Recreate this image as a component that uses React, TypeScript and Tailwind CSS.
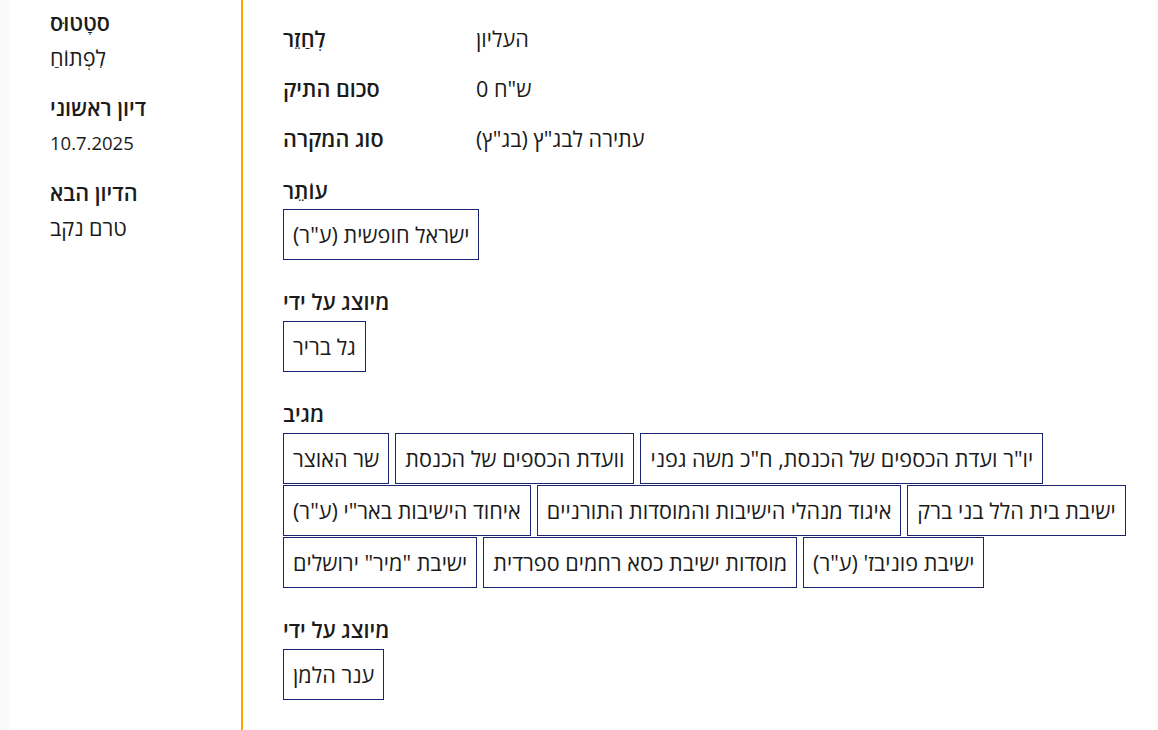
const font = { fontFamily: '"Open Sans", "Liberation Sans", "DejaVu Sans", sans-serif' };

const sideItems = [
    { label: 'סטָטוּס', value: 'לִפְתוֹחַ' },
    { label: 'דיון ראשוני', value: '10.7.2025', latin: true },
    { label: 'הדיון הבא', value: 'טרם נקב' },
];

const rows = [
    { label: 'לְחַזֵר', value: 'העליון' },
    { label: 'סכום התיק', value: 'ש"ח 0' },
    { label: 'סוג המקרה', value: 'עתירה לבג"ץ (בג"ץ)' },
];

const sections = [
    { title: 'עוֹתֵר', tags: ['ישראל חופשית (ע"ר)'], first: true },
    { title: 'מיוצג על ידי', tags: ['גל בריר'] },
    {
        title: 'מגיב',
        tags: [
            'שר האוצר',
            'וועדת הכספים של הכנסת',
            'יו"ר ועדת הכספים של הכנסת, ח"כ משה גפני',
            'איחוד הישיבות באר"י (ע"ר)',
            'איגוד מנהלי הישיבות והמוסדות התורניים',
            'ישיבת בית הלל בני ברק',
            'ישיבת "מיר" ירושלים',
            'מוסדות ישיבת כסא רחמים ספרדית',
            'ישיבת פוניבז\' (ע"ר)',
        ],
    },
    { title: 'מיוצג על ידי', tags: ['ענר הלמן'] },
];

// Hebrew glyphs in the installed fonts run small, so Hebrew text is set a little larger
const Tag = ({ text }: { text: string }) => (
    <div className="border border-[#1c2470] px-[9px] py-[12px] leading-[25px]">
        <span dir="rtl" className="inline-block">{text}</span>
    </div>
);

const App = () => {
    return (
        <div dir="ltr" style={font} className="flex h-[730px] overflow-hidden bg-white text-[21.6px] text-[#1b1b1b]">
            {/* sidebar */}
            <aside className="flex w-[243px] shrink-0 border-r-2 border-[#ffa500]">
                <div className="w-[10px] bg-[#fafafa]"></div>
                <div className="flex flex-col pl-[40px] pt-[10px]">
                    {sideItems.map((item) => (
                        <div key={item.label} className="mb-[25px] flex flex-col items-start gap-[10px] leading-[25px]">
                            <span dir="rtl" className="inline-block font-semibold">{item.label}</span>
                            {item.latin ? (
                                <span className="inline-block text-[18.5px]">{item.value}</span>
                            ) : (
                                <span dir="rtl" className="inline-block">{item.value}</span>
                            )}
                        </div>
                    ))}
                </div>
            </aside>

            {/* main */}
            <main className="flex-1 pl-[40px]">
                <div className="pt-[13px]">
                    {rows.map((row) => (
                        <div key={row.label} className="flex h-[50px] items-center leading-[25px]">
                            <div className="w-[193px] shrink-0">
                                <span dir="rtl" className="inline-block font-semibold">{row.label}</span>
                            </div>
                            <span dir="rtl" className="inline-block">{row.value}</span>
                        </div>
                    ))}
                </div>

                {sections.map((sec, i) => (
                    <section key={i} className={sec.first ? 'mt-[15px]' : 'mt-[29px]'}>
                        <div className="leading-[25px]">
                            <span dir="rtl" className="inline-block font-semibold">{sec.title}</span>
                        </div>
                        <div className={`${sec.first ? 'mt-[6px]' : 'mt-[7px]'} flex flex-wrap gap-x-[6px] gap-y-[1px]`}>
                            {sec.tags.map((t) => (
                                <Tag key={t} text={t} />
                            ))}
                        </div>
                    </section>
                ))}
            </main>
        </div>
    );
};

export default App;
